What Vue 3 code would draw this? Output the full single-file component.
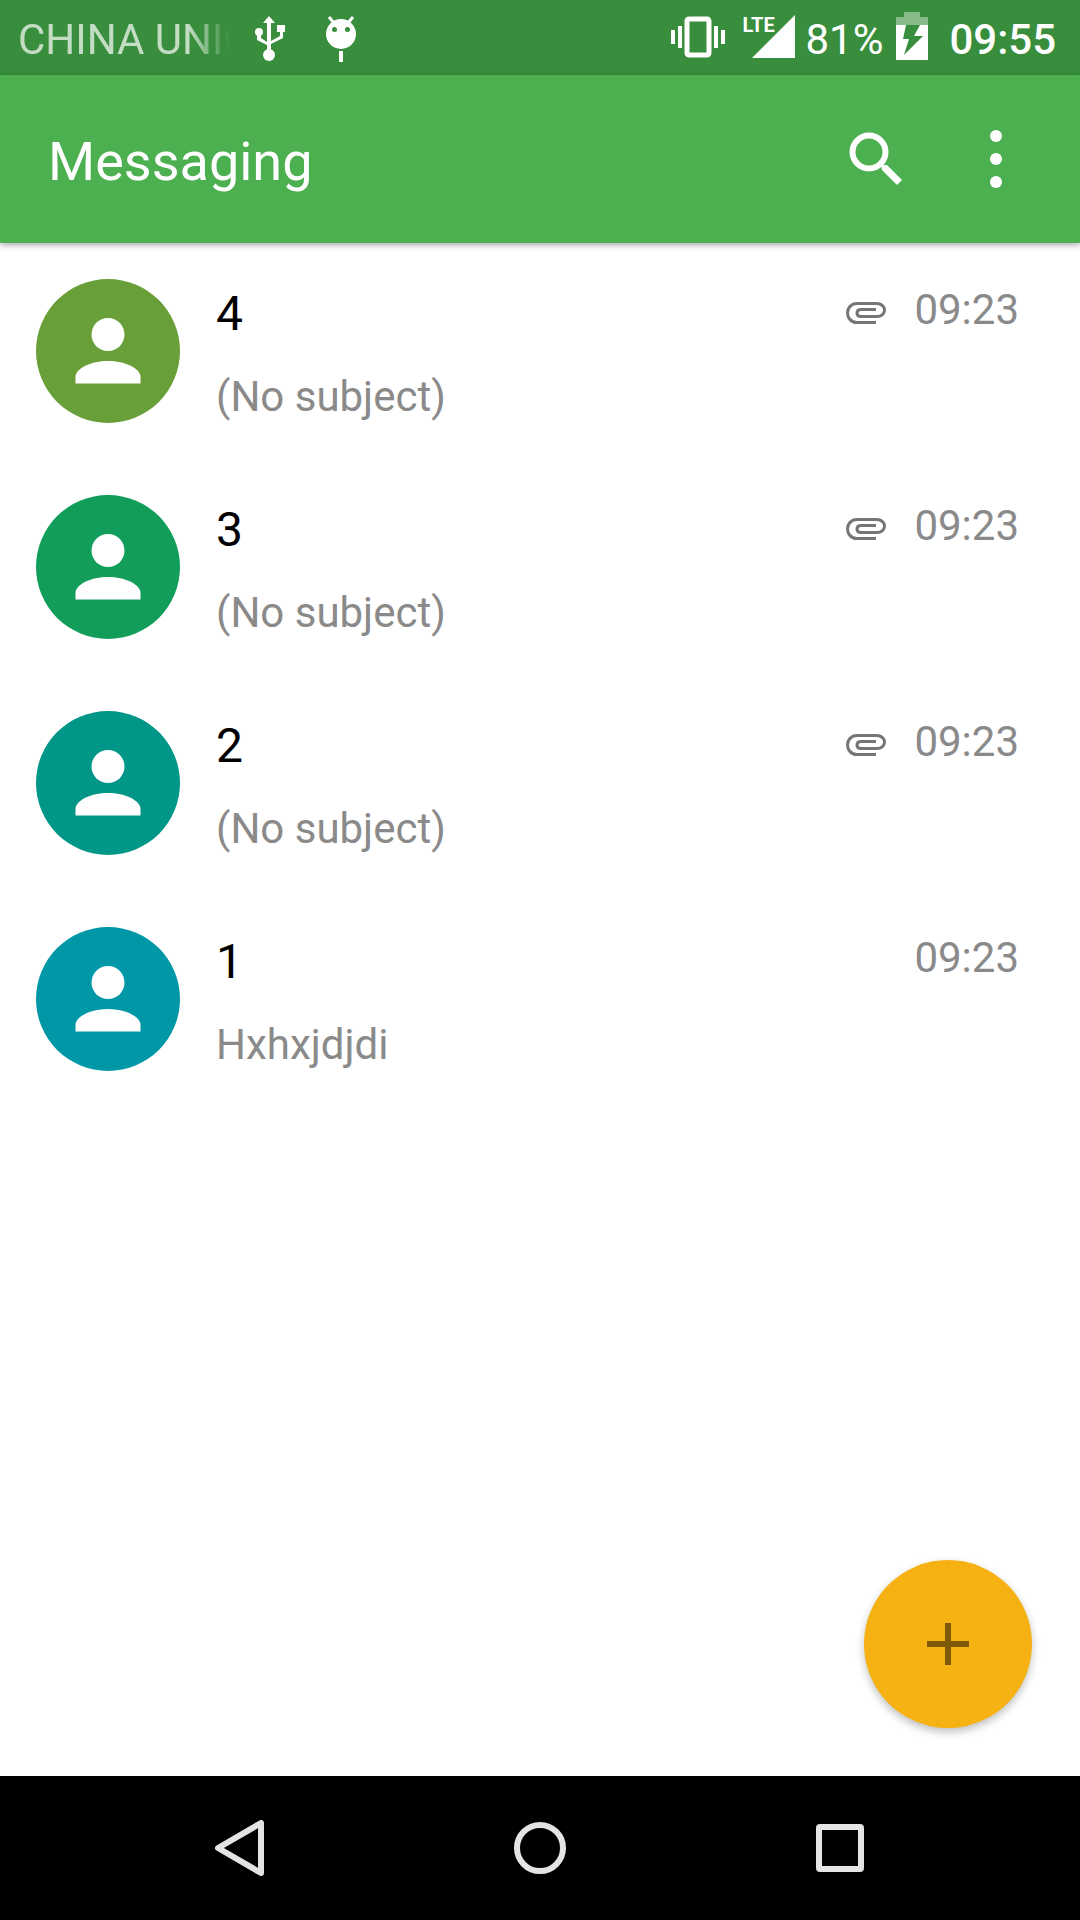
<script setup>
const conversations = [
  { name: '4', snippet: '(No subject)', time: '09:23', attachment: true, tone: 'olive' },
  { name: '3', snippet: '(No subject)', time: '09:23', attachment: true, tone: 'green' },
  { name: '2', snippet: '(No subject)', time: '09:23', attachment: true, tone: 'teal' },
  { name: '1', snippet: 'Hxhxjdjdi', time: '09:23', attachment: false, tone: 'cyan' },
]
</script>

<template>
  <div class="screen">
    <header class="status-bar">
      <span class="carrier">CHINA UNICOM</span>
      <span class="notice">
        <svg width="32" height="46" viewBox="0 0 32 46" fill="#fff" aria-hidden="true">
          <path d="M15 0l6 7h-4v18l9-5v-4h-3V9h8v7h-2v6l-12 6v6h-4v-5L3 24v-5h4v3l6 4V7H9z" />
          <circle cx="5" cy="16" r="4" />
          <circle cx="15" cy="39" r="6" />
        </svg>
      </span>
      <span class="notice">
        <svg width="32" height="46" viewBox="0 0 32 46" aria-hidden="true">
          <path d="M4 1l5 6M28 1l-5 6" stroke="#fff" stroke-width="3" />
          <circle cx="16" cy="18" r="15" fill="#fff" />
          <path d="M14 35h4v11h-4z" fill="#fff" />
          <circle cx="9.5" cy="13.5" r="2.5" fill="#388e3c" />
          <circle cx="22.5" cy="13.5" r="2.5" fill="#388e3c" />
        </svg>
      </span>
      <div class="system">
        <svg width="54" height="42" viewBox="0 0 54 42" fill="#fff" aria-hidden="true">
          <path d="M0 14h4v14H0zM7 10h4v22H7zM43 10h4v22h-4zM50 14h4v14h-4z" />
          <rect x="16" y="3" width="22" height="36" rx="2" fill="none" stroke="#fff" stroke-width="5" />
        </svg>
        <span class="signal">
          <svg width="54" height="44" viewBox="0 0 54 44" fill="#fff" aria-hidden="true">
            <path d="M53 0v43H10z" />
          </svg>
          <span class="network">LTE</span>
        </span>
        <span class="percent">81%</span>
        <svg class="battery" width="32" height="48" viewBox="0 0 32 48" fill="#fff" aria-hidden="true">
          <path d="M8 0h16v5h8v8H0V5h8z" opacity=".4" />
          <path d="M0 13h32v35H0z" />
          <path d="M10 13h14l-6 11h9L8 43l5-16H7z" fill="#388e3c" />
        </svg>
        <time class="clock">09:55</time>
      </div>
    </header>

    <div class="app-bar">
      <h1>Messaging</h1>
      <button type="button" aria-label="Search">
        <svg width="54" height="54" viewBox="0 0 54 54" aria-hidden="true">
          <circle cx="20" cy="20" r="16.5" fill="none" stroke="#fff" stroke-width="6" />
          <path d="M32 33l6 0 15 15-5 5-15-15z" fill="#fff" />
        </svg>
      </button>
      <button type="button" aria-label="More options">
        <svg width="12" height="58" viewBox="0 0 12 58" fill="#fff" aria-hidden="true">
          <circle cx="6" cy="6" r="6" />
          <circle cx="6" cy="29" r="6" />
          <circle cx="6" cy="52" r="6" />
        </svg>
      </button>
    </div>

    <main>
      <ul class="conversations">
        <li v-for="item in conversations" :key="item.name">
          <a href="#" class="conversation">
            <span class="avatar" :class="item.tone">
              <svg width="66" height="66" viewBox="0 0 66 66" fill="#fff" aria-hidden="true">
                <circle cx="33" cy="16.5" r="16.5" />
                <path d="M.5 65.5V58C2 50 16 43 33 43s31 7 32.5 15v7.5z" />
              </svg>
            </span>
            <span class="text">
              <span class="name">{{ item.name }}</span>
              <span class="snippet">{{ item.snippet }}</span>
            </span>
            <span class="meta">
              <svg v-if="item.attachment" width="40" height="22" viewBox="0 0 40 22" fill="none" stroke="#757575" stroke-width="3" role="img" aria-label="Attachment">
                <path d="M30 20.5H11C5 20.5 1.5 16 1.5 11S5 1.5 11 1.5h20c4 0 7.5 3 7.5 6.5s-3 6.5-7.5 6.5H15c-2.500 0-4-1.5-4-3.5s1.5-3.5 4-3.5h15" />
              </svg>
              <time>{{ item.time }}</time>
            </span>
          </a>
        </li>
      </ul>
      <button type="button" class="compose" aria-label="New message">
        <svg width="42" height="42" viewBox="0 0 42 42" fill="#7d5909" aria-hidden="true">
          <path d="M18 0h6v18h18v6H24v18h-6V24H0v-6h18z" />
        </svg>
      </button>
    </main>

    <nav class="nav-bar">
      <button type="button" aria-label="Back">
        <svg width="56" height="56" viewBox="0 0 56 56" aria-hidden="true">
          <path d="M6 28L49 3v50z" />
        </svg>
      </button>
      <button type="button" aria-label="Home">
        <svg width="56" height="56" viewBox="0 0 56 56" aria-hidden="true">
          <circle cx="28" cy="28" r="23" />
        </svg>
      </button>
      <button type="button" aria-label="Recent apps">
        <svg width="56" height="56" viewBox="0 0 56 56" aria-hidden="true">
          <rect x="7" y="7" width="42" height="42" rx="1" />
        </svg>
      </button>
    </nav>
  </div>
</template>

<style>
body {
  margin: 0;
  background: #fff;
}
</style>

<style scoped>
.screen {
  display: flex;
  flex-direction: column;
  min-height: 100vh;
  font-family: Roboto, sans-serif;
  font-size: 42px;
  line-height: 48px;
  color: #000;
}

svg {
  display: block;
  flex: none;
}

button {
  display: flex;
  align-items: center;
  justify-content: center;
  padding: 0;
  border: 0;
  background: none;
}

.status-bar {
  display: flex;
  align-items: center;
  box-sizing: border-box;
  height: 75px;
  padding: 0 24px 1px 18px;
  background: #388e3c;
  color: #fff;
}

.carrier,
.percent,
.clock {
  padding-top: 6px;
}

.carrier {
  width: 216px;
  overflow: hidden;
  white-space: nowrap;
  opacity: 0.7;
  mask-image: linear-gradient(to right, #000 170px, transparent 212px);
}

.notice {
  display: flex;
  justify-content: center;
  width: 71px;
  padding-top: 3px;
}

.system {
  display: flex;
  align-items: center;
  margin-left: auto;
}

.signal {
  position: relative;
  margin: 0 9px 0 17px;
}

.network {
  position: absolute;
  top: 0;
  left: 0;
  font-size: 20px;
  line-height: 20px;
  font-weight: 700;
}

.battery {
  margin: 0 21px 2px 13px;
}

.clock {
  font-weight: 500;
}

.app-bar {
  position: relative;
  display: flex;
  align-items: center;
  height: 168px;
  padding: 0 24px 0 48px;
  background: #4caf50;
  color: #fff;
  box-shadow: 0 2px 6px rgba(0, 0, 0, 0.35);
}

.app-bar h1 {
  flex: 1;
  margin: 0;
  padding-top: 6px;
  font-size: 54px;
  line-height: 64px;
  font-weight: 400;
}

.app-bar button {
  width: 120px;
  height: 120px;
}

main {
  position: relative;
  flex: 1;
}

.conversations {
  margin: 0;
  padding: 0;
  list-style: none;
}

.conversation {
  display: flex;
  gap: 36px;
  padding: 36px 61px 36px 36px;
  color: inherit;
  text-decoration: none;
}

.avatar {
  display: flex;
  align-items: center;
  justify-content: center;
  width: 144px;
  height: 144px;
  border-radius: 50%;
}

.olive { background: #689f38; }
.green { background: #129e5a; }
.teal { background: #009688; }
.cyan { background: #0097a7; }

.text {
  display: flex;
  flex: 1;
  flex-direction: column;
  gap: 31px;
  padding-top: 7px;
}

.name {
  font-size: 48px;
  line-height: 56px;
}

.snippet,
.meta {
  color: #8a8a8a;
}

.meta {
  display: flex;
  align-items: center;
  gap: 28px;
  height: 48px;
  padding-top: 7px;
}

.meta svg {
  margin-top: 6px;
}

.compose {
  position: absolute;
  right: 48px;
  bottom: 48px;
  width: 168px;
  height: 168px;
  border-radius: 50%;
  background: #f6b113;
  box-shadow: 0 4px 8px rgba(0, 0, 0, 0.25);
}

.nav-bar {
  display: flex;
  justify-content: center;
  height: 144px;
  background: #000;
}

.nav-bar button {
  width: 300px;
}

.nav-bar svg {
  fill: none;
  stroke: #e4e4e4;
  stroke-width: 6;
  stroke-linejoin: round;
}
</style>
